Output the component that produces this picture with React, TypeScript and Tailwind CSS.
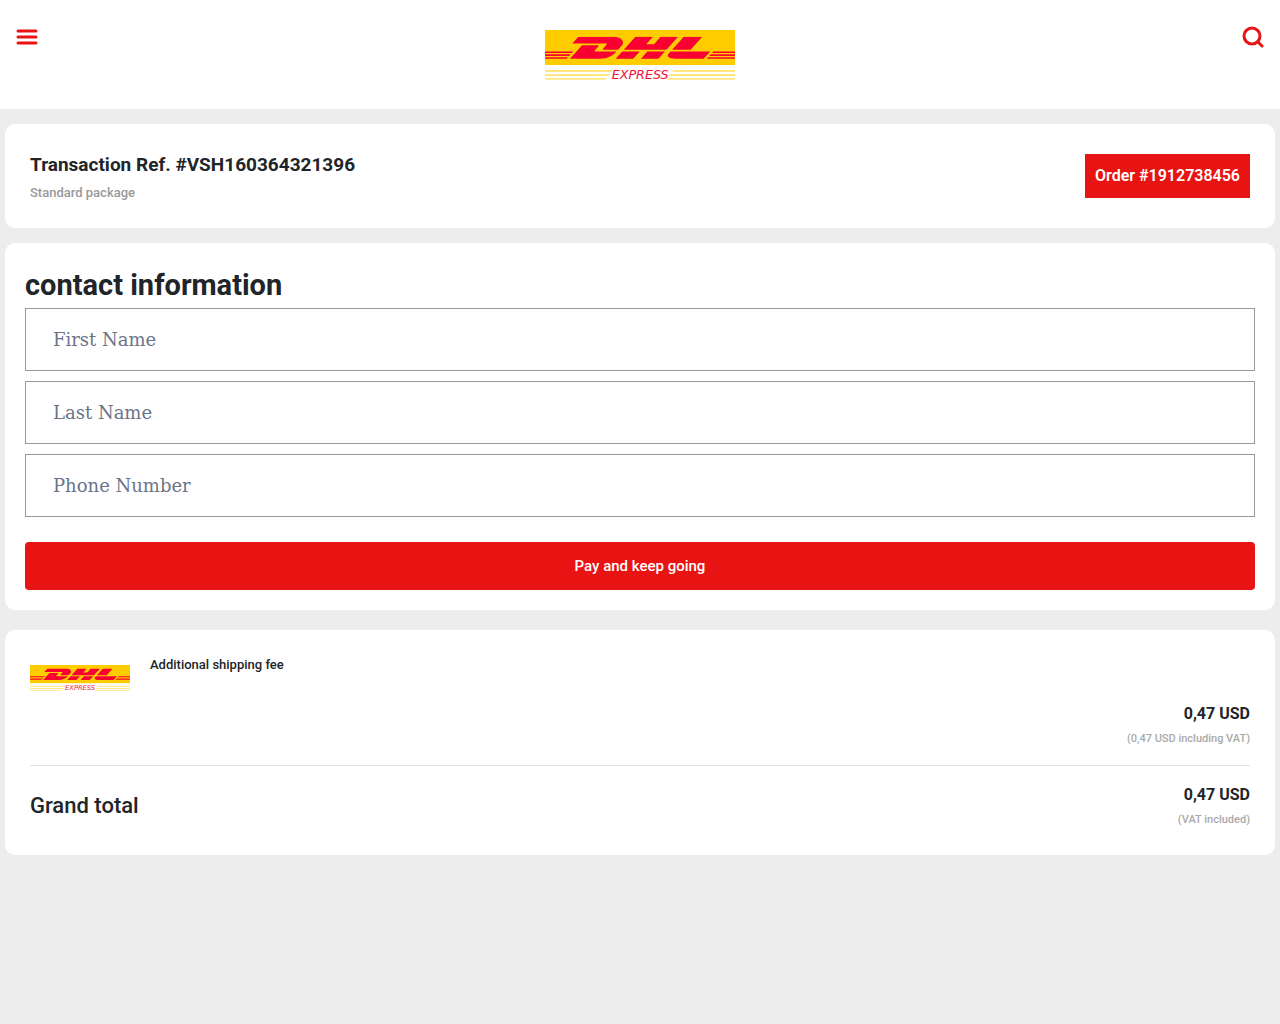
import { FaDhl } from "react-icons/fa6";

function Logo({ className }: { className: string }) {
  return (
    <svg
      viewBox="0 0 567 150"
      preserveAspectRatio="none"
      className={`overflow-visible ${className}`}
      role="img"
      aria-label="DHL Express"
    >
      <rect width="567" height="105" fill="#ffcc00" />
      <FaDhl
        viewBox="0 210 640 92"
        preserveAspectRatio="none"
        y="20"
        className="w-[567px] h-[67px] text-[#f80032]"
      />
      <g fill="#ffe680">
        <path d="M0 120h204l-6 6H0zM0 132h194l-5 6H0zM0 144h185l-4 5H0z" />
        <path d="M384 120h183v6H379zM375 132h192v6H370zM368 144h199v5H364z" />
      </g>
      <text
        x="284"
        y="147"
        textAnchor="middle"
        fill="#f0143c"
        fontSize="38"
        fontStyle="italic"
        fontFamily="'DejaVu Sans', sans-serif"
      >
        EXPRESS
      </text>
    </svg>
  );
}

function Field({ label, type = "text" }: { label: string; type?: string }) {
  return (
    <input
      type={type}
      aria-label={label}
      placeholder={label}
      className="block w-full h-[63px] px-[27px] border border-[#999] bg-white font-['DejaVu_Serif',serif] text-lg placeholder:text-[#6b7489]"
    />
  );
}

function Price({ note }: { note: string }) {
  return (
    <div className="text-right">
      <p className="text-base leading-[26px] font-bold">0,47 USD</p>
      <p className="mt-[2px] text-[11px] leading-5 font-medium text-[#aaa]">{note}</p>
    </div>
  );
}

export default function App() {
  return (
    <div className="min-h-screen bg-[#ededed] text-[#212529] font-['Roboto',sans-serif]">
      <header className="flex items-start justify-between h-[109px] px-4 bg-white text-[#e81313]">
        <button type="button" aria-label="Menu" className="mt-[26px]">
          <svg width="22" height="22" viewBox="0 0 22 22" stroke="currentColor" strokeWidth="3" strokeLinecap="round">
            <path d="M2 5h18M2 11h18M2 17h18" />
          </svg>
        </button>
        <Logo className="mt-[30px] w-[190px] h-[50px]" />
        <button type="button" aria-label="Search" className="mt-[26px]">
          <svg width="22" height="22" viewBox="0 0 22 22" fill="none" stroke="currentColor" strokeWidth="3" strokeLinecap="round">
            <circle cx="10" cy="10" r="8" />
            <path d="M16 16l4 4" />
          </svg>
        </button>
      </header>

      <main className="px-[5px] pt-[15px]">
        <section className="flex items-start justify-between p-[25px] rounded-[10px] bg-white">
          <div>
            <h1 className="text-[19px] leading-8 font-bold">Transaction Ref. #VSH160364321396</h1>
            <p className="mt-[2px] text-[13px] leading-5 font-medium text-[#999]">Standard package</p>
          </div>
          <p className="mt-[5px] px-[10px] bg-[#e81313] text-white leading-[44px] font-semibold">Order #1912738456</p>
        </section>

        <section className="mt-[15px] p-5 rounded-[10px] bg-white">
          <h2 className="text-[29px] leading-[45px] font-bold">contact information</h2>
          <form onSubmit={(e) => e.preventDefault()}>
            <div className="flex flex-col gap-[10px]">
              <Field label="First Name" />
              <Field label="Last Name" />
              <Field label="Phone Number" type="tel" />
            </div>
            <button type="submit" className="block w-full h-12 mt-[25px] rounded bg-[#e81313] text-white text-[15px] font-medium">
              Pay and keep going
            </button>
          </form>
        </section>

        <section className="mt-5 p-[25px] rounded-[10px] bg-white">
          <div className="flex items-start gap-5">
            <Logo className="mt-[10px] w-[100px] h-[26px]" />
            <p className="text-[13px] leading-5 font-medium">Additional shipping fee</p>
          </div>
          <div className="mt-[10px] pb-4 border-b border-[#e2e2e2]">
            <Price note="(0,47 USD including VAT)" />
          </div>
          <div className="flex items-center justify-between pt-4">
            <h3 className="text-[22px] leading-8 font-medium">Grand total</h3>
            <Price note="(VAT included)" />
          </div>
        </section>
      </main>
    </div>
  );
}
